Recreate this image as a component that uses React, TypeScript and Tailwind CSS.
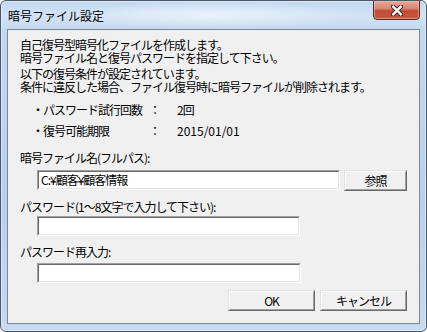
import React from "react";

const font = "font-['Noto_Sans_CJK_JP','Noto_Sans_CJK_SC',sans-serif]";

function Input({ w, value }: { w: string; value?: string }) {
  return (
    <div className={`${w} h-[20px] border border-t-[#a0a0a0] border-l-[#a0a0a0] border-r-white border-b-white`}>
      <div className="h-full w-full border border-t-[#696969] border-l-[#696969] border-r-[#e3e3e3] border-b-[#e3e3e3] bg-white flex items-center pl-[2px]">
        {value ? <span className="text-[12px] leading-[12px] tracking-[-1px] text-black whitespace-nowrap">{value}</span> : null}
      </div>
    </div>
  );
}

function Button({ w, label }: { w: string; label: string }) {
  return (
    <div className={`${w} h-[21px] border border-t-[#e3e3e3] border-l-[#e3e3e3] border-r-[#696969] border-b-[#696969]`}>
      <div className="h-full w-full border border-t-white border-l-white border-r-[#a0a0a0] border-b-[#a0a0a0] bg-[#f0f0f0] flex items-center justify-center">
        <span className="text-[12px] leading-[12px] tracking-[-1px] text-black">{label}</span>
      </div>
    </div>
  );
}

export default function App() {
  return (
    <div className={`${font} w-[427px] h-[332px] relative overflow-hidden rounded-[6px] border border-[#4a5869] bg-[linear-gradient(180deg,#c1d7ef_0px,#d3e3f5_14px,#c4d9f0_28px,#b9d0eb_60%,#c6daf1_100%)]`}>
      <div className="absolute inset-0 rounded-[5px] border border-[#e6f0fa]/70 pointer-events-none" />
      <div className="absolute left-[60px] top-0 w-[300px] h-[28px] bg-[radial-gradient(ellipse_at_center,rgba(235,244,252,0.9),rgba(235,244,252,0)_70%)] pointer-events-none" />
      {/* Title bar */}
      <div className="relative h-[28px] flex items-start">
        <span className="ml-[7px] mt-[8px] text-[12px] leading-[14px] text-black">暗号ファイル設定</span>
      </div>
      {/* Close button */}
      <div className="absolute top-[-1px] right-[6px] w-[47px] h-[20px] rounded-b-[4px] border border-[#5c2a22] bg-[linear-gradient(180deg,#e6a797_0%,#d88a77_40%,#c34a34_55%,#c55a3f_100%)] flex items-center justify-center shadow-[inset_0_0_0_1px_rgba(255,200,190,0.5)]">
        <svg width="12" height="11" viewBox="0 0 12 11">
          <path d="M2 1.5 L10 9.5 M10 1.5 L2 9.5" stroke="#40201a" strokeWidth="4.4" strokeLinecap="square" />
          <path d="M2.3 1.8 L9.7 9.2 M9.7 1.8 L2.3 9.2" stroke="#ffffff" strokeWidth="2.4" strokeLinecap="square" />
        </svg>
      </div>
      {/* Client area */}
      <div className="relative ml-[6px] w-[413px] h-[295px] border border-[#7b8796] bg-[#f0f0f0] text-black">
        <div className="pt-[8px] pl-[12px] pr-[12px] flex flex-col text-[12px] leading-[12px] tracking-[-1px]">
          <div className="leading-[13px]">自己復号型暗号化ファイルを作成します。</div>
          <div className="leading-[13px]">暗号ファイル名と復号パスワードを指定して下さい。</div>
          <div className="mt-[3px] leading-[13px]">以下の復号条件が設定されています。</div>
          <div className="leading-[13px]">条件に違反した場合、ファイル復号時に暗号ファイルが削除されます。</div>
          <div className="mt-[11px] flex">
            <span className="ml-[12px] w-[117px]">・パスワード試行回数</span>
            <span className="w-[28px]">：</span>
            <span>2回</span>
          </div>
          <div className="mt-[9px] flex">
            <span className="ml-[12px] w-[117px]">・復号可能期限</span>
            <span className="w-[28px]">：</span>
            <span className="tracking-normal">2015/01/01</span>
          </div>
          <div className="mt-[15px]">暗号ファイル名(フルパス):</div>
          <div className="mt-[6px] flex items-start ml-[17px]">
            <Input w="w-[303px]" value="C:¥顧客¥顧客情報" />
            <div className="ml-[4px]">
              <Button w="w-[63px]" label="参照" />
            </div>
          </div>
          <div className="mt-[10px]">パスワード(1～8文字で入力して下さい):</div>
          <div className="mt-[3px] ml-[17px]">
            <Input w="w-[263px]" />
          </div>
          <div className="mt-[10px]">パスワード再入力:</div>
          <div className="mt-[5px] ml-[17px]">
            <Input w="w-[264px]" />
          </div>
          <div className="mt-[7px] flex justify-end gap-[5px]">
            <Button w="w-[87px]" label="OK" />
            <Button w="w-[87px]" label="キャンセル" />
          </div>
        </div>
      </div>
    </div>
  );
}
